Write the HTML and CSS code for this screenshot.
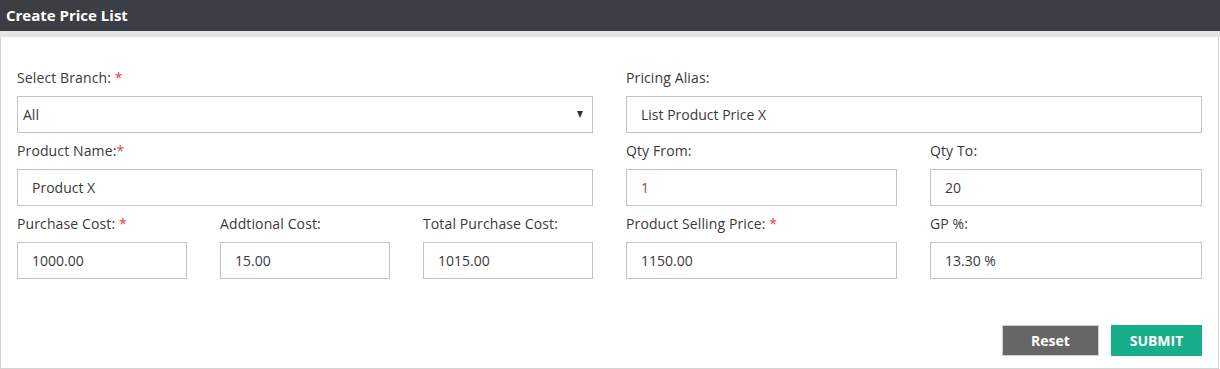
FILE: index.html
```html
<!DOCTYPE html>
<html>
<head>
<meta charset="utf-8">
<link rel="stylesheet" href="styles.css">
</head>
<body>
<div class="header">Create Price List</div>
<div class="strip"></div>
<div class="panel">
  <div class="grid">
    <div class="half">
      <div class="field">
        <label class="lbl">Select Branch: <span class="req">*</span></label>
        <div class="select"><span>All</span><span class="arrow"></span></div>
      </div>
      <div class="field">
        <label class="lbl">Product Name:<span class="req">*</span></label>
        <div class="input">Product X</div>
      </div>
      <div class="cols3">
        <div class="field">
          <label class="lbl">Purchase Cost: <span class="req">*</span></label>
          <div class="input">1000.00</div>
        </div>
        <div class="field">
          <label class="lbl">Addtional Cost:</label>
          <div class="input">15.00</div>
        </div>
        <div class="field">
          <label class="lbl">Total Purchase Cost:</label>
          <div class="input">1015.00</div>
        </div>
      </div>
    </div>
    <div class="half">
      <div class="field">
        <label class="lbl">Pricing Alias:</label>
        <div class="input">List Product Price X</div>
      </div>
      <div class="cols2">
        <div class="field">
          <label class="lbl">Qty From:</label>
          <div class="input red">1</div>
        </div>
        <div class="field">
          <label class="lbl">Qty To:</label>
          <div class="input">20</div>
        </div>
      </div>
      <div class="cols2">
        <div class="field">
          <label class="lbl">Product Selling Price: <span class="req">*</span></label>
          <div class="input">1150.00</div>
        </div>
        <div class="field">
          <label class="lbl">GP %:</label>
          <div class="input">13.30 %</div>
        </div>
      </div>
    </div>
  </div>
  <div class="actions">
    <button class="btn reset">Reset</button>
    <button class="btn submit">SUBMIT</button>
  </div>
</div>
</body>
</html>
```
FILE: styles.css
```css
* { box-sizing: border-box; }
body {
  margin: 0;
  font-family: "Open Sans", "Liberation Sans", sans-serif;
  font-size: 14px;
  color: #333;
  background: #fff;
  width: 1220px;
}
.header {
  height: 31px;
  background: #3b3e45;
  color: #fff;
  font-weight: 700;
  font-size: 15px;
  line-height: 31px;
  padding-left: 6px;
}
.strip {
  height: 6px;
  background: #e3e3e3;
}
.panel {
  border: 1px solid #d2d2d2;
  border-top: none;
  margin-right: 1px;
  padding: 31px 15px 12px 16px;
}
.grid {
  display: grid;
  grid-template-columns: 576px 576px;
  column-gap: 33px;
}
.half {
  display: flex;
  flex-direction: column;
  gap: 8px;
}
.field {
  display: flex;
  flex-direction: column;
  gap: 8px;
}
.lbl {
  line-height: 20px;
  height: 20px;
  color: #3a3a3a;
  letter-spacing: 0.12px;
}
.req { color: #e0413b; }
.input, .select {
  height: 37px;
  border: 1px solid #c3c3c3;
  line-height: 35px;
  padding-left: 14px;
  color: #3a3a3a;
}
.input.red { color: #a0453d; }
.select {
  padding-left: 5px;
  display: flex;
  justify-content: space-between;
  align-items: center;
  padding-right: 9px;
}
.arrow {
  width: 0; height: 0;
  border-left: 3.5px solid transparent;
  border-right: 3.5px solid transparent;
  border-top: 7px solid #333;
}
.cols3 {
  display: grid;
  grid-template-columns: 170px 170px 170px;
  column-gap: 33px;
}
.cols2 {
  display: grid;
  grid-template-columns: 271px 272px;
  column-gap: 33px;
}
.actions {
  display: flex;
  justify-content: flex-end;
  gap: 12px;
  margin-top: 46px;
  padding-right: 1px;
}
.btn {
  height: 31px;
  font-family: "Open Sans", "Liberation Sans", sans-serif;
  font-weight: 700;
  font-size: 14px;
  color: #fff;
  border: 1px solid #d0d0d0;
  padding: 0;
}
.reset { width: 97px; background: #666; }
.submit { width: 91px; background: #17ae8a; border-color: #17ae8a; }
```
